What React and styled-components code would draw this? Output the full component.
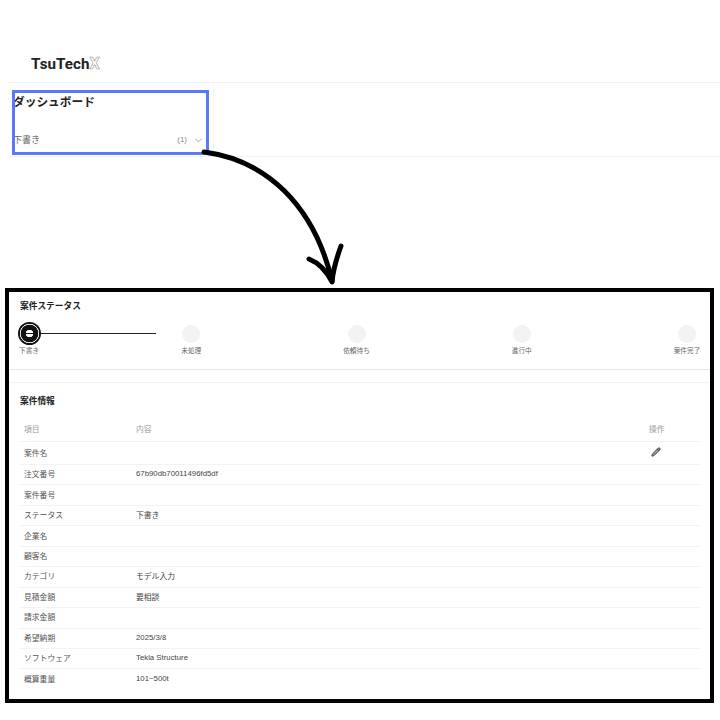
import React from 'react'
import styled, { createGlobalStyle } from 'styled-components'
import { ChevronDown, Pencil } from 'lucide-react'

const STEPS = ['下書き', '未処理', '依頼待ち', '進行中', '案件完了']

const ROWS = [
  { label: '案件名', value: '', editable: true },
  { label: '注文番号', value: '67b90db70011496fd5df' },
  { label: '案件番号', value: '' },
  { label: 'ステータス', value: '下書き' },
  { label: '企業名', value: '' },
  { label: '顧客名', value: '' },
  { label: 'カテゴリ', value: 'モデル入力' },
  { label: '見積金額', value: '要相談' },
  { label: '請求金額', value: '' },
  { label: '希望納期', value: '2025/3/8' },
  { label: 'ソフトウェア', value: 'Tekla Structure' },
  { label: '概算重量', value: '101~500t' },
]

const App = () => {
  return (
    <Page>
      <GlobalStyle />
      <Header>
        <Logo>TsuTech<LogoMark>X</LogoMark></Logo>
      </Header>

      <Dashboard>
        <Highlight>
          <DashTitle>ダッシュボード</DashTitle>
          <DraftRow>
            <span>下書き</span>
            <Count>
              (1) <ChevronDown size={11} strokeWidth={1.6} />
            </Count>
          </DraftRow>
        </Highlight>
      </Dashboard>

      <Frame>
        <StatusPanel>
          <SectionTitle>案件ステータス</SectionTitle>
          <Stepper>
            {STEPS.map((step, i) => (
              <Step key={step} $active={i === 0}>
                <Dot $active={i === 0} />
                <StepLabel>{step}</StepLabel>
              </Step>
            ))}
          </Stepper>
        </StatusPanel>

        <InfoPanel>
          <SectionTitle>案件情報</SectionTitle>
          <Table>
            <HeadRow>
              <span>項目</span>
              <span>内容</span>
              <span>操作</span>
            </HeadRow>
            {ROWS.map((row) => (
              <Row key={row.label} $tall={row.editable}>
                <span>{row.label}</span>
                <Value>{row.value}</Value>
                <span>{row.editable && <Pencil size={10} strokeWidth={2} fill="#999" />}</span>
              </Row>
            ))}
          </Table>
        </InfoPanel>
      </Frame>

      <Arrow viewBox="0 0 720 720" fill="none" stroke="#000" strokeWidth="5" strokeLinecap="round" strokeLinejoin="round">
        <path d="M204 152C266 160 314 205 332 281" />
        <path d="M309 259C319 263 327 272 332 282C333 270 337 257 341 246" />
      </Arrow>
    </Page>
  )
}

export default App

const GlobalStyle = createGlobalStyle`
  html, body {
    margin: 0;
    background: #fff;
  }
  * {
    box-sizing: border-box;
  }
`

const Page = styled.div`
  position: relative;
  width: 720px;
  height: 720px;
  overflow: hidden;
  background: #fff;
  font-family: "Liberation Sans", "Noto Sans CJK JP", sans-serif;
  color: #333;
`

const Header = styled.header`
  height: 83px;
  margin-left: 7px;
  padding: 54px 0 0 24px;
  border-bottom: 1px solid #f1f1f1;
`

const Logo = styled.div`
  font-family: Roboto, sans-serif;
  font-size: 15.2px;
  line-height: 20px;
  font-weight: 700;
  color: #222;
`

const LogoMark = styled.span`
  font-size: 16px;
  color: #fff;
  -webkit-text-stroke: 0.6px #999;
`

const Dashboard = styled.section`
  position: relative;
  width: 207px;
  height: 74px;
  margin-left: 7px;
  padding: 7px 0 0 5px;
  border-right: 1px solid #f4f4f4;

  &::after {
    content: '';
    position: absolute;
    left: 0;
    bottom: 0;
    width: 713px;
    height: 1px;
    background: #f1f1f1;
  }
`

const Highlight = styled.div`
  width: 197px;
  height: 65px;
  padding: 3px 0 0 1px;
  outline: 3px solid #5b79f5;
  outline-offset: -3px;
`

const DashTitle = styled.h1`
  margin: 0;
  font-size: 11.7px;
  line-height: 17px;
  font-weight: 700;
  color: #222;
`

const DraftRow = styled.div`
  display: flex;
  align-items: center;
  justify-content: space-between;
  margin-top: 23px;
  padding-right: 5px;
  font-size: 9px;
  line-height: 14px;
  color: #666;
`

const Count = styled.span`
  display: flex;
  align-items: center;
  gap: 6px;
  font-size: 8px;
  color: #888;
`

const Frame = styled.section`
  width: 709px;
  height: 415px;
  margin: 131px 0 0 5px;
  border: 4px solid #000;
  background: #fff;
`

const StatusPanel = styled.div`
  height: 78px;
  padding-top: 7px;
  border-bottom: 1px solid #e6e6e6;
`

const SectionTitle = styled.h2`
  margin: 0 0 0 11px;
  font-size: 8.7px;
  line-height: 14px;
  font-weight: 700;
  color: #222;
`

const Stepper = styled.div`
  display: flex;
  justify-content: space-between;
  width: 698px;
  margin-top: 9px;
`

const Step = styled.div`
  position: relative;
  display: flex;
  flex-direction: column;
  align-items: center;
  width: 40px;
  height: 40px;
  margin-right: ${(p) => (p.$active ? '-3px' : '0')};

  &::after {
    content: '';
    display: ${(p) => (p.$active ? 'block' : 'none')};
    position: absolute;
    left: 20px;
    top: 11px;
    width: 127px;
    height: 1px;
    background: #222;
  }
`

const Dot = styled.div`
  position: relative;
  z-index: 1;
  flex: none;
  width: ${(p) => (p.$active ? '23px' : '18px')};
  height: ${(p) => (p.$active ? '23px' : '18px')};
  margin: ${(p) => (p.$active ? '0' : '2.5px 0')};
  border-radius: 50%;
  background: ${(p) => (p.$active ? 'radial-gradient(circle, #fff 0 3.5px, #111 4px 8.5px, #ddd 9px 9.5px, #111 10px)' : '#f3f3f3')};

  &::before {
    content: '';
    display: ${(p) => (p.$active ? 'block' : 'none')};
    position: absolute;
    left: 8px;
    top: 11px;
    width: 7px;
    height: 1px;
    background: #111;
  }
`

const StepLabel = styled.span`
  margin-top: 1px;
  font-size: 6.7px;
  line-height: 10px;
  white-space: nowrap;
  color: #666;
`

const InfoPanel = styled.div`
  margin-top: 12px;
  padding-top: 11px;
  border-top: 1px solid #f3f3f3;
`

const Table = styled.div`
  width: 680px;
  margin: 8px 0 0 11px;
`

const rowColumns = '112px 513px 1fr'

const HeadRow = styled.div`
  display: grid;
  grid-template-columns: ${rowColumns};
  align-items: center;
  height: 26px;
  padding-left: 4px;
  border-bottom: 1px solid #f1f1f1;
  font-size: 7.8px;
  color: #999;
`

const Row = styled.div`
  display: grid;
  grid-template-columns: ${rowColumns};
  align-items: center;
  height: ${(p) => (p.$tall ? '23px' : '20.45px')};
  padding: 0 0 2px 4px;
  border-bottom: 1px solid #f3f3f3;
  font-size: 7.8px;
  color: #555;

  &:last-child {
    border-bottom: 0;
  }

  svg {
    display: block;
    margin-left: 2px;
    color: #333;
  }
`

const Value = styled.span`
  color: #444;
`

const Arrow = styled.svg`
  position: absolute;
  inset: 0;
  width: 720px;
  height: 720px;
  pointer-events: none;
`
